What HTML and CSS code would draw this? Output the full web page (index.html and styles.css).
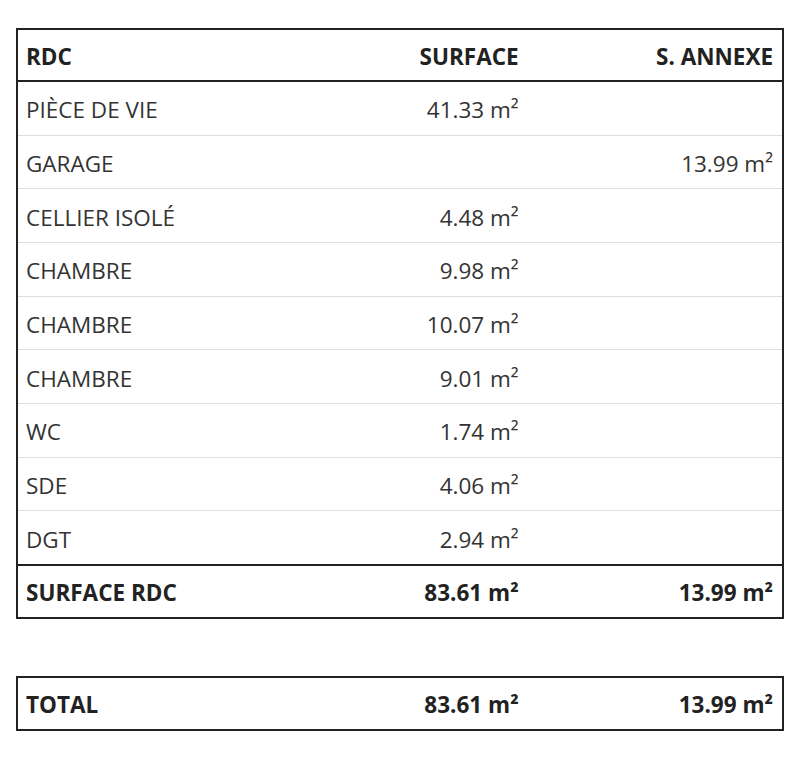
FILE: index.html
```html
<!DOCTYPE html>
<html lang="fr">
<head>
<meta charset="utf-8">
<link rel="stylesheet" href="styles.css">
</head>
<body>
<div class="page">
<table class="surf">
  <thead>
    <tr><th>RDC</th><th class="num">SURFACE</th><th class="num">S. ANNEXE</th></tr>
  </thead>
  <tbody>
    <tr><td>PIÈCE DE VIE</td><td class="num">41.33 m²</td><td class="num"></td></tr>
    <tr><td>GARAGE</td><td class="num"></td><td class="num">13.99 m²</td></tr>
    <tr><td>CELLIER ISOLÉ</td><td class="num">4.48 m²</td><td class="num"></td></tr>
    <tr><td>CHAMBRE</td><td class="num">9.98 m²</td><td class="num"></td></tr>
    <tr><td>CHAMBRE</td><td class="num">10.07 m²</td><td class="num"></td></tr>
    <tr><td>CHAMBRE</td><td class="num">9.01 m²</td><td class="num"></td></tr>
    <tr><td>WC</td><td class="num">1.74 m²</td><td class="num"></td></tr>
    <tr><td>SDE</td><td class="num">4.06 m²</td><td class="num"></td></tr>
    <tr><td>DGT</td><td class="num">2.94 m²</td><td class="num"></td></tr>
  </tbody>
  <tfoot>
    <tr class="sum"><th>SURFACE RDC</th><th class="num">83.61 m²</th><th class="num">13.99 m²</th></tr>
  </tfoot>
</table>
<table class="surf total">
  <tbody>
    <tr class="sum"><th>TOTAL</th><th class="num">83.61 m²</th><th class="num">13.99 m²</th></tr>
  </tbody>
</table>
</div>
</body>
</html>
```
FILE: styles.css
```css
html, body {
  margin: 0;
  padding: 0;
  background: #fff;
}
.page {
  padding: 28px 16px 0 16px;
  font-family: "Open Sans", "Noto Sans", sans-serif;
  color: #333;
}
.surf {
  width: 768px;
  border-collapse: collapse;
  table-layout: fixed;
  border: 2px solid #222;
  font-size: 22.5px;
  line-height: 30px;
}
.surf th, .surf td {
  text-align: left;
  vertical-align: middle;
}
.surf td {
  font-weight: 400;
  padding: 13.33px 9px 9.33px 8px;
}
.surf th {
  font-weight: 700;
  color: #222;
  padding: 12px 9px 8px 8px;
}
.surf .sum th {
  padding-bottom: 9px;
}
.surf .num {
  text-align: right;
}
.surf thead tr {
  border-bottom: 2px solid #222;
}
.surf tbody tr + tr {
  border-top: 1px solid #ddd;
}
.surf tfoot tr {
  border-top: 2px solid #222;
}
.total {
  margin-top: 57px;
}
```
